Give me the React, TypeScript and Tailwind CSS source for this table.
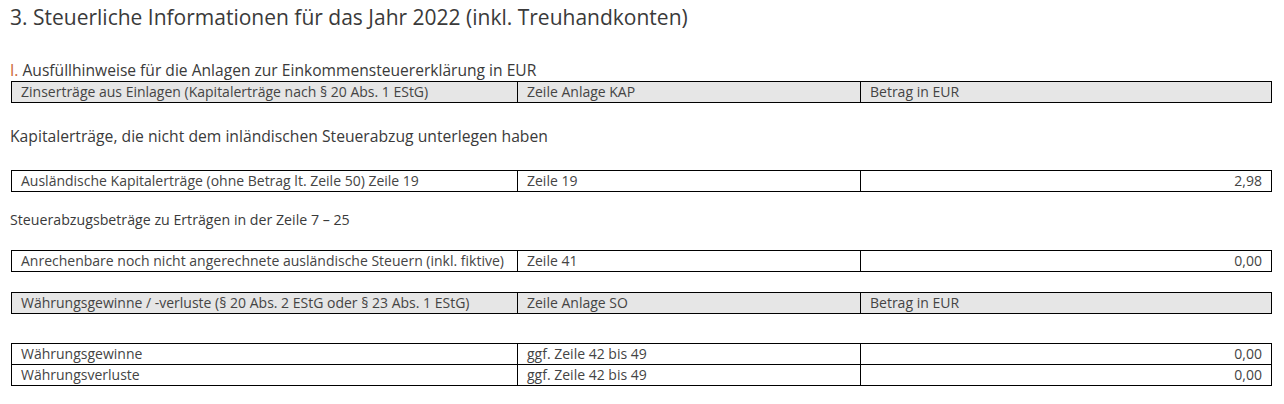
type Cell = { text: string; right?: boolean };

function Table({ rows, gray }: { rows: Cell[][]; gray?: boolean }) {
  return (
    <div className={`ml-px mr-[2px] border border-black ${gray ? "bg-[#e6e6e6]" : "bg-white"}`}>
      {rows.map((row, i) => (
        <div
          key={i}
          className={`grid grid-cols-[505px_343px_1fr] text-[14px] leading-[20px] text-[#444] ${i > 0 ? "border-t border-black" : ""}`}
        >
          {row.map((c, j) => (
            <div
              key={j}
              className={`h-[20px] px-[9px] whitespace-nowrap ${j > 0 ? "border-l border-black" : ""} ${c.right ? "text-right" : ""}`}
            >
              {c.text}
            </div>
          ))}
        </div>
      ))}
    </div>
  );
}

export default function App() {
  return (
    <main className="min-h-[404px] bg-white px-[10px] font-['Open_Sans',sans-serif] text-[#3a3a3a]">
      <h1 className="pt-[3px] text-[21px] leading-[28px]">
        3. Steuerliche Informationen für das Jahr 2022 (inkl. Treuhandkonten)
      </h1>

      <p className="mt-[29px] text-[15.6px] leading-[20px]">
        <span className="text-[#cc6633]">I.</span> Ausfüllhinweise für die Anlagen zur Einkommensteuererklärung in EUR
      </p>
      <div className="mt-px">
        <Table
          gray
          rows={[[{ text: "Zinserträge aus Einlagen (Kapitalerträge nach § 20 Abs. 1 EStG)" }, { text: "Zeile Anlage KAP" }, { text: "Betrag in EUR" }]]}
        />
      </div>

      <p className="mt-[22px] text-[15.7px] leading-[22px]">
        Kapitalerträge, die nicht dem inländischen Steuerabzug unterlegen haben
      </p>
      <div className="mt-[23px]">
        <Table
          rows={[[{ text: "Ausländische Kapitalerträge (ohne Betrag lt. Zeile 50) Zeile 19" }, { text: "Zeile 19" }, { text: "2,98", right: true }]]}
        />
      </div>

      <p className="mt-[18px] text-[14.2px] leading-[20px]">Steuerabzugsbeträge zu Erträgen in der Zeile 7 – 25</p>
      <div className="mt-[20px]">
        <Table
          rows={[[{ text: "Anrechenbare noch nicht angerechnete ausländische Steuern (inkl. fiktive)" }, { text: "Zeile 41" }, { text: "0,00", right: true }]]}
        />
      </div>

      <div className="mt-[20px]">
        <Table
          gray
          rows={[[{ text: "Währungsgewinne / -verluste (§ 20 Abs. 2 EStG oder § 23 Abs. 1 EStG)" }, { text: "Zeile Anlage SO" }, { text: "Betrag in EUR" }]]}
        />
      </div>

      <div className="mt-[29px]">
        <Table
          rows={[
            [{ text: "Währungsgewinne" }, { text: "ggf. Zeile 42 bis 49" }, { text: "0,00", right: true }],
            [{ text: "Währungsverluste" }, { text: "ggf. Zeile 42 bis 49" }, { text: "0,00", right: true }],
          ]}
        />
      </div>
    </main>
  );
}
